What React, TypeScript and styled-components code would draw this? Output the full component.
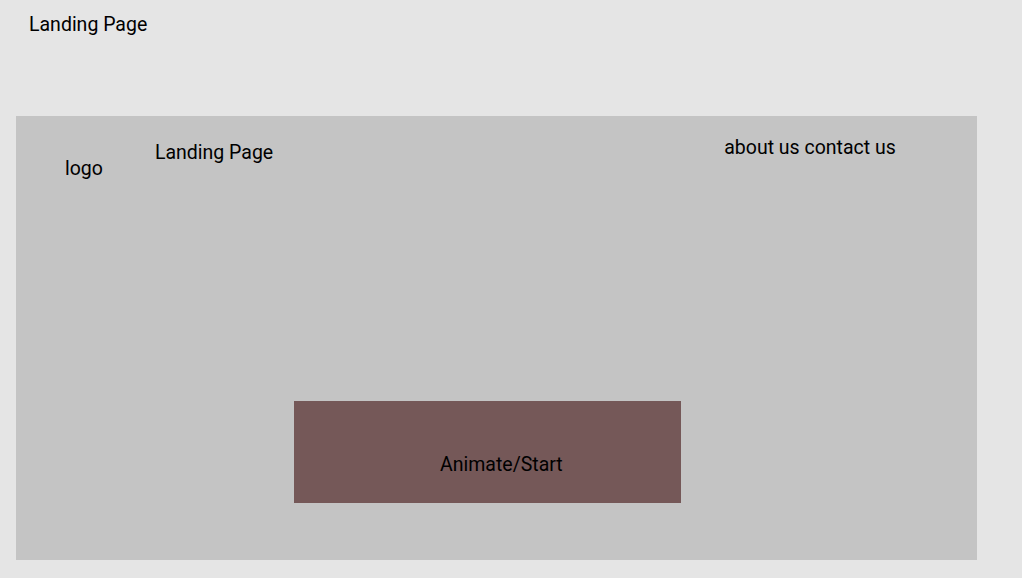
import React from "react";
import styled, { createGlobalStyle } from "styled-components";

const GlobalStyle = createGlobalStyle`
  html, body {
    margin: 0;
    padding: 0;
    background: #e5e5e5;
  }
  body {
    font-family: Roboto, "Liberation Sans", sans-serif;
    color: #000;
  }
`;

const Page = styled.div`
  width: 1022px;
  height: 578px;
  padding: 13px 0 0 16px;
  box-sizing: border-box;
  overflow: hidden;
`;

const PageTitle = styled.div`
  font-size: 19.5px;
  line-height: 23px;
  margin-left: 13px;
  margin-bottom: 80px;
`;

const Frame = styled.section`
  width: 961px;
  height: 444px;
  background: #c4c4c4;
  display: flex;
  flex-direction: column;
`;

const Header = styled.header`
  height: 100px;
  display: flex;
  align-items: flex-start;
`;

// each header item sits at its own drop from the top of the frame
const HeaderItem = styled.div<{ $left: number; $top: number }>`
  font-size: 19.5px;
  line-height: 23px;
  white-space: nowrap;
  margin-left: ${({ $left }) => $left}px;
  margin-top: ${({ $top }) => $top}px;
`;

const StartButton = styled.button`
  width: 387px;
  height: 102px;
  margin: 185px 0 0 278px;
  padding: 52px 0 0 146px;
  box-sizing: border-box;
  background: #755858;
  border: none;
  display: flex;
  align-items: flex-start;
  font-family: Roboto, "Liberation Sans", sans-serif;
  font-size: 19.5px;
  line-height: 23px;
  color: #000;
  cursor: pointer;
`;

function App() {
  return (
    <>
      <GlobalStyle />
      <Page>
        <PageTitle>Landing Page</PageTitle>
        <Frame>
          <Header>
            <HeaderItem $left={49} $top={41}>
              logo
            </HeaderItem>
            <HeaderItem $left={52} $top={25}>
              Landing Page
            </HeaderItem>
            <HeaderItem $left={451} $top={20}>
              about us contact us
            </HeaderItem>
          </Header>
          <StartButton>Animate/Start</StartButton>
        </Frame>
      </Page>
    </>
  );
}

export default App;
